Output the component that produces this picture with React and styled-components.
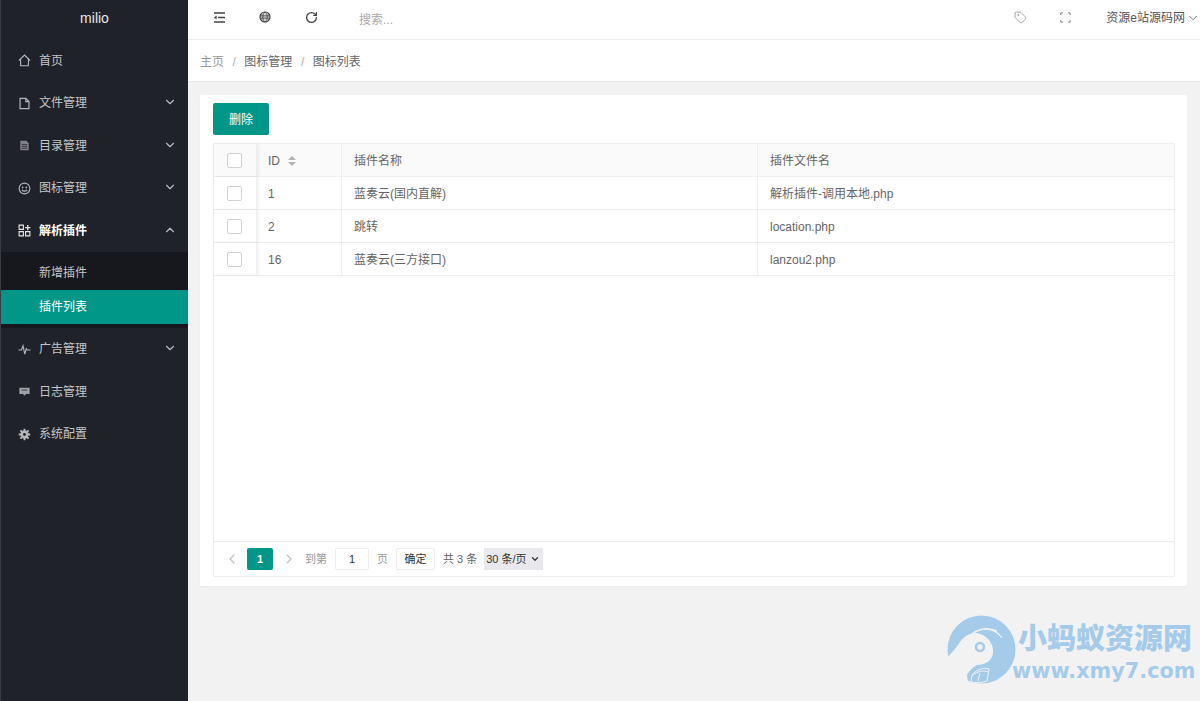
import React from 'react';
import styled, { createGlobalStyle } from 'styled-components';
import { ChevronDown, ChevronUp, ChevronLeft, ChevronRight, RotateCw, Tag } from 'lucide-react';

const GlobalStyle = createGlobalStyle`
  html, body { margin: 0; padding: 0; height: 100%; overflow: hidden; }
  body { font-family: "Liberation Sans", "Noto Sans CJK SC", sans-serif; font-size: 12px; line-height: 16px; color: #666; background: #f2f2f2; }
  #root { height: 100%; }
  * { box-sizing: border-box; }
`;

const Page = styled.div`
  position: relative;
  display: flex;
  height: 701px;
  width: 1200px;
  overflow: hidden;
`;
const Sidebar = styled.aside`
  width: 188px;
  flex: none;
  background: #20222a;
  border-left: 1px solid #3a3c44;
  display: flex;
  flex-direction: column;
`;
const Logo = styled.div`
  height: 39.5px;
  line-height: 36px;
  text-align: center;
  color: #e8e8e8;
  font-size: 14px;
`;
const MenuItem = styled.div`
  height: 42.5px;
  display: flex;
  align-items: center;
  padding: 0 11px 0 17px;
  color: ${p => (p.$open ? '#fff' : '#c4c5c7')};
  font-weight: ${p => (p.$open ? 600 : 400)};
  svg.ico { width: 13px; height: 13px; margin-right: 8px; flex: none; color: #b4b5b8; }
  svg.arrow { width: 14px; height: 14px; margin: -2px 0 0 auto; color: #b9babd; }
`;
const SubMenu = styled.div`
  background: #17181d;
  padding: 4px 0;
`;
const SubItem = styled.div`
  height: 34px;
  line-height: 34px;
  padding-left: 38px;
  color: ${p => (p.$active ? '#fff' : '#c4c5c7')};
  background: ${p => (p.$active ? '#009688' : 'transparent')};
`;
const Main = styled.main`
  flex: 1;
  display: flex;
  flex-direction: column;
  min-width: 0;
`;
const TopBar = styled.header`
  height: 40px;
  flex: none;
  background: #fff;
  border-bottom: 1px solid #eee;
  display: flex;
  align-items: center;
  padding-left: 25px;
`;
const ToolIcon = styled.span`
  display: flex;
  width: ${p => p.$w || 46}px;
  margin-top: ${p => p.$top ?? -5}px;
  color: ${p => p.$color || '#444'};
`;
const Search = styled.span`
  margin-left: 6px;
  color: #aaa;
`;
const TopRight = styled.div`
  margin-left: auto;
  display: flex;
  align-items: center;
  margin-top: -3px;
`;
const User = styled.span`
  display: flex;
  align-items: center;
  gap: 1px;
  color: #555;
  svg { width: 14px; height: 14px; color: #666; stroke-width: 1.5; }
`;
const Crumbs = styled.nav`
  height: 41px;
  flex: none;
  background: #fff;
  display: flex;
  align-items: center;
  padding: 2px 0 0 12px;
  color: #666;
  box-shadow: 0 1px 2px rgba(0, 0, 0, 0.05);
`;
const CrumbHome = styled.span`
  color: #999;
`;
const CrumbSep = styled.span`
  color: #aaa;
  margin: 0 8.5px;
`;
const Content = styled.div`
  flex: 1;
  padding: 14px 13px 0 12px;
`;
const Card = styled.section`
  height: 491px;
  background: #fff;
  padding: 8px 12px 9px 13px;
  border-radius: 2px;
  display: flex;
  flex-direction: column;
  box-shadow: 0 1px 2px rgba(0, 0, 0, 0.04);
`;
const DeleteButton = styled.button`
  width: 56px;
  height: 32px;
  flex: none;
  border: 0;
  border-radius: 2px;
  background: #009688;
  color: #fff;
  font: inherit;
  padding: 2px 0 0;
`;
const TableBox = styled.div`
  flex: 1;
  margin-top: 8px;
  border: 1px solid #eee;
  display: flex;
  flex-direction: column;
`;
const Row = styled.div`
  position: relative;
  height: 33px;
  flex: none;
  display: grid;
  grid-template-columns: 43px 85px 416px 1fr;
  border-bottom: 1px solid #eee;
  background: ${p => (p.$head ? '#fafafa' : '#fff')};
  align-items: stretch;
`;
const Cell = styled.div`
  display: flex;
  align-items: center;
  padding: 2px 0 0 ${p => (p.$first ? 11 : 12)}px;
  border-right: 1px solid #eee;
  color: #666;
  &:last-child { border-right: 0; }
`;
const CheckCell = styled.div`
  display: flex;
  align-items: center;
  padding-left: 13px;
  box-shadow: 2px 0 3px rgba(0, 0, 0, 0.06);
  border-right: 1px solid #eee;
  background: inherit;
`;
const Check = styled.span`
  width: 15px;
  height: 15px;
  border: 1px solid #d2d2d2;
  background: #fff;
  border-radius: 2px;
`;
const Sort = styled.span`
  display: inline-flex;
  flex-direction: column;
  gap: 2px;
  margin-left: 8px;
  &::before, &::after {
    content: '';
    border-left: 4px solid transparent;
    border-right: 4px solid transparent;
  }
  &::before { border-bottom: 4px solid #b2b2b2; }
  &::after { border-top: 4px solid #b2b2b2; }
`;
const Spacer = styled.div`
  flex: 1;
`;
const Pager = styled.div`
  height: 35px;
  flex: none;
  border-top: 1px solid #eee;
  display: flex;
  align-items: center;
  padding-left: 10px;
  color: #666;
  font-size: 11px;
`;
const PageArrow = styled.span`
  display: flex;
  color: #c2c2c2;
  margin: ${p => p.$m};
  svg { width: 16px; height: 16px; }
`;
const PageNum = styled.span`
  width: 26px;
  height: 22px;
  line-height: 22px;
  text-align: center;
  background: #009688;
  color: #fff;
  border-radius: 2px;
  font-weight: 600;
`;
const PagerLabel = styled.span`
  color: ${p => p.$color || '#999'};
  margin: ${p => p.$m || 0};
`;
const PageInput = styled.span`
  width: 34px;
  height: 22px;
  line-height: 20px;
  border: 1px solid #eee;
  border-radius: 2px;
  text-align: center;
  color: #333;
  margin-left: 8px;
`;
const Confirm = styled.span`
  width: 39px;
  height: 22px;
  line-height: 20px;
  border: 1px solid #eee;
  border-radius: 2px;
  text-align: center;
  color: #333;
  margin-left: 8px;
`;
const PerPage = styled.span`
  width: 59px;
  height: 22px;
  display: flex;
  align-items: center;
  gap: 3px;
  padding-left: 2px;
  margin-left: 7px;
  background: #e9e9ed;
  color: #333;
  white-space: nowrap;
  svg { width: 10px; height: 10px; stroke-width: 3; flex: none; }
`;
const Watermark = styled.div`
  position: absolute;
  left: 947px;
  top: 615px;
  width: 253px;
  height: 72px;
  pointer-events: none;
  display: flex;
`;
const WatermarkLogo = styled.svg`
  width: 69px;
  height: 69px;
  flex: none;
`;
const WatermarkText = styled.div`
  position: absolute;
  left: 65px;
  top: 1px;
  color: #a5cbea;
  font-weight: 700;
  white-space: nowrap;
`;
const WatermarkTitle = styled.div`
  font-size: 29px;
  line-height: 40px;
  padding-left: 6px;
  font-weight: 900;
  font-family: "Noto Sans CJK SC", sans-serif;
`;
const WatermarkUrl = styled.div`
  font-family: "DejaVu Sans", sans-serif;
  font-size: 20.8px;
  line-height: 24px;
  margin-top: 3px;
`;

const line = { fill: 'none', stroke: 'currentColor', strokeWidth: 1.2 };

const HomeIcon = () => (
  <svg className="ico" viewBox="0 0 14 14"><path {...line} d="M1 7 7 1.2 13 7M2.8 6v6.6h8.4V6" /></svg>
);
const FileIcon = () => (
  <svg className="ico" viewBox="0 0 14 14"><path {...line} strokeWidth="1.3" d="M2.2 1.5h6.3l3.3 3.3v7.7H2.2zM8.4 1.5v3.4h3.4" /></svg>
);
const ListIcon = () => (
  <svg className="ico" viewBox="0 0 14 14"><path fill="currentColor" opacity=".65" d="M2.5 2h6.5l2.5 2.5V12h-9z" /><path stroke="#20222a" strokeWidth=".8" d="M4 6h6M4 8h6M4 10h6" /></svg>
);
const SmileIcon = () => (
  <svg className="ico" viewBox="0 0 14 14"><circle {...line} cx="7" cy="7" r="5.8" /><circle cx="5" cy="5.8" r=".9" fill="currentColor" /><circle cx="9" cy="5.8" r=".9" fill="currentColor" /><path {...line} d="M4.2 8.5c1.2 1.8 4.4 1.8 5.6 0" /></svg>
);
const AppsIcon = () => (
  <svg className="ico" viewBox="0 0 14 14" style={{ color: '#e6e6e6' }}>
    <path {...line} d="M1.2 1.2h4.6v4.6H1.2zM1.2 8.2h4.6v4.6H1.2zM8.2 8.2h4.6v4.6H8.2z" />
    <path fill="currentColor" d="M9.8 1h1.4v2.1h2.1v1.4h-2.1v2.1H9.8V4.5H7.7V3.1h2.1z" />
  </svg>
);
const PulseIcon = () => (
  <svg className="ico" viewBox="0 0 14 14"><path {...line} d="M.5 7.5h3.2L5.4 3l1.9 9 1.6-6 .9 1.5h3.7" /></svg>
);
const ChatIcon = () => (
  <svg className="ico" viewBox="0 0 14 14"><path fill="currentColor" opacity=".85" d="M1.5 3h11v6.6H8.6L7 11.6 5.4 9.6H1.5z" /><path stroke="#20222a" strokeWidth=".8" d="M4 5.4h6" /></svg>
);
const GearIcon = () => (
  <svg className="ico" viewBox="0 0 14 14">
    <circle cx="7" cy="7" r="3" fill="none" stroke="currentColor" strokeWidth="3" />
    <path stroke="currentColor" strokeWidth="2" d="M7 .8v2.4M7 10.8v2.4M.8 7h2.4M10.8 7h2.4M2.6 2.6l1.7 1.7M9.7 9.7l1.7 1.7M2.6 11.4l1.7-1.7M9.7 4.3l1.7-1.7" />
  </svg>
);

const ShrinkIcon = () => (
  <svg width="13" height="13" viewBox="0 0 13 13"><path stroke="currentColor" strokeWidth="1.3" fill="none" d="M1 2h11M5 6.5h7M1 11h11" /><path fill="currentColor" d="M3.6 4.5v4L1 6.5z" /></svg>
);
const GlobeIcon = () => (
  <svg width="12" height="12" viewBox="0 0 12 12"><circle {...line} cx="6" cy="6" r="5" /><path {...line} strokeWidth=".9" d="M1 4.2h10M1 6h10M1 7.8h10M6 1c-3 2.8-3 7.2 0 10M6 1c3 2.8 3 7.2 0 10" /></svg>
);
const FullscreenIcon = () => (
  <svg width="11" height="11" viewBox="0 0 11 11"><path fill="none" stroke="currentColor" strokeWidth="1" d="M.8 3V.8H3M8 .8h2.2V3M.8 8v2.2H3M8 10.2h2.2V8" /></svg>
);

const rows = [
  { id: 1, name: '蓝奏云(国内直解)', file: '解析插件-调用本地.php' },
  { id: 2, name: '跳转', file: 'location.php' },
  { id: 16, name: '蓝奏云(三方接口)', file: 'lanzou2.php' },
];

export default function App() {
  return (
    <Page>
      <GlobalStyle />
      <Sidebar>
        <Logo>milio</Logo>
        <MenuItem><HomeIcon />首页</MenuItem>
        <MenuItem><FileIcon />文件管理<ChevronDown className="arrow" /></MenuItem>
        <MenuItem><ListIcon />目录管理<ChevronDown className="arrow" /></MenuItem>
        <MenuItem><SmileIcon />图标管理<ChevronDown className="arrow" /></MenuItem>
        <MenuItem $open><AppsIcon />解析插件<ChevronUp className="arrow" /></MenuItem>
        <SubMenu>
          <SubItem>新增插件</SubItem>
          <SubItem $active>插件列表</SubItem>
        </SubMenu>
        <MenuItem><PulseIcon />广告管理<ChevronDown className="arrow" /></MenuItem>
        <MenuItem><ChatIcon />日志管理</MenuItem>
        <MenuItem><GearIcon />系统配置</MenuItem>
      </Sidebar>
      <Main>
        <TopBar>
          <ToolIcon><ShrinkIcon /></ToolIcon>
          <ToolIcon><GlobeIcon /></ToolIcon>
          <ToolIcon $w={48}><RotateCw size={13} strokeWidth={2.4} /></ToolIcon>
          <Search>搜索...</Search>
          <TopRight>
            <ToolIcon $w={46} $top={-2} $color="#777"><Tag size={13} strokeWidth={1.2} /></ToolIcon>
            <ToolIcon $w={46} $top={-2} $color="#888"><FullscreenIcon /></ToolIcon>
            <User>资源e站源码网<ChevronDown /></User>
          </TopRight>
        </TopBar>
        <Crumbs>
          <CrumbHome>主页</CrumbHome>
          <CrumbSep>/</CrumbSep>
          图标管理
          <CrumbSep>/</CrumbSep>
          图标列表
        </Crumbs>
        <Content>
          <Card>
            <DeleteButton>删除</DeleteButton>
            <TableBox>
              <Row $head>
                <CheckCell><Check /></CheckCell>
                <Cell $first>ID<Sort /></Cell>
                <Cell>插件名称</Cell>
                <Cell>插件文件名</Cell>
              </Row>
              {rows.map(r => (
                <Row key={r.id}>
                  <CheckCell><Check /></CheckCell>
                  <Cell $first>{r.id}</Cell>
                  <Cell>{r.name}</Cell>
                  <Cell>{r.file}</Cell>
                </Row>
              ))}
              <Spacer />
              <Pager>
                <PageArrow $m="0 7px 0 0"><ChevronLeft /></PageArrow>
                <PageNum>1</PageNum>
                <PageArrow $m="0 0 0 8px"><ChevronRight /></PageArrow>
                <PagerLabel $m="0 0 0 8px">到第</PagerLabel>
                <PageInput>1</PageInput>
                <PagerLabel $m="0 0 0 8px">页</PagerLabel>
                <Confirm>确定</Confirm>
                <PagerLabel $color="#666" $m="0 0 0 8px">共 3 条</PagerLabel>
                <PerPage>30 条/页<ChevronDown /></PerPage>
              </Pager>
            </TableBox>
          </Card>
        </Content>
      </Main>
      <Watermark>
        <WatermarkLogo viewBox="0 0 69 69">
          <circle cx="34.5" cy="34.5" r="34" fill="#a5cbea" />
          <path d="M0 43C5 37 10 32 13 27C18 20 26 16 33 19C42 22 47 30 46 38C45 46 38 50 30 50C26 52 22 56 20 60L21 68C12 64 5 54 0 43Z" fill="#f2f2f2" />
          <circle cx="33" cy="32" r="4" fill="none" stroke="#a5cbea" strokeWidth="2.5" />
          <path d="M21 23C30 12 46 10 55 23M27 17C35 13 44 13 50 16" fill="none" stroke="#f2f2f2" strokeWidth="1.3" />
          <path d="M24 67L25 60C30 54 37 52 42 54L40 66C35 68 29 68 24 67Z" fill="#a5cbea" stroke="#f2f2f2" strokeWidth="1" />
          <path d="M26 60C31 56 37 55 41 57M31 66L33 58" fill="none" stroke="#f2f2f2" strokeWidth="1" />
        </WatermarkLogo>
        <WatermarkText>
          <WatermarkTitle>小蚂蚁资源网</WatermarkTitle>
          <WatermarkUrl>www.xmy7.com</WatermarkUrl>
        </WatermarkText>
      </Watermark>
    </Page>
  );
}
